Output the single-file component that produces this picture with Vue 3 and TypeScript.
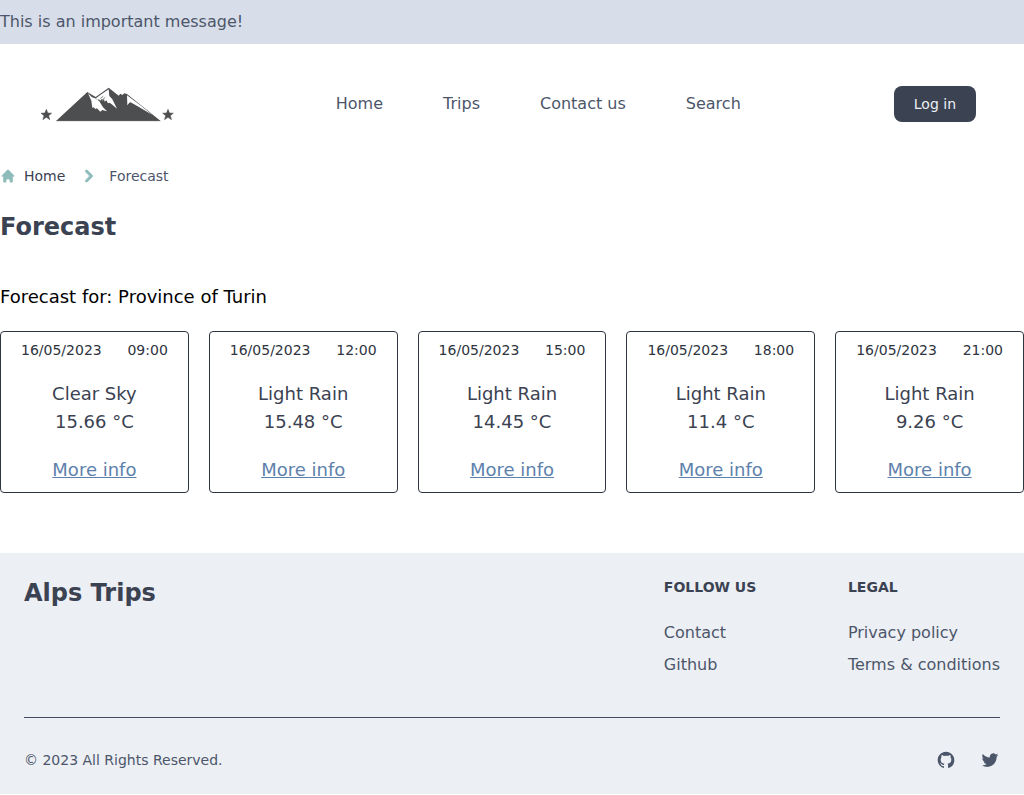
<script setup lang="ts">
interface Slot {
  time: string
  sky: string
  temp: string
}

const date = '16/05/2023'
const navLinks: string[] = ['Home', 'Trips', 'Contact us', 'Search']
const slots: Slot[] = [
  { time: '09:00', sky: 'Clear Sky', temp: '15.66' },
  { time: '12:00', sky: 'Light Rain', temp: '15.48' },
  { time: '15:00', sky: 'Light Rain', temp: '14.45' },
  { time: '18:00', sky: 'Light Rain', temp: '11.4' },
  { time: '21:00', sky: 'Light Rain', temp: '9.26' },
]
const footerGroups = [
  { title: 'Follow us', links: ['Contact', 'Github'] },
  { title: 'Legal', links: ['Privacy policy', 'Terms & conditions'] },
]
</script>

<template>
  <div class="page">
    <div class="banner">This is an important message!</div>

    <header class="header">
      <svg class="logo" viewBox="0 0 465 150" aria-label="Alps Trips">
        <g fill="#4d4e50">
          <path d="M78 123 L172 36 L197 51 L236 23 L266 47 L271 41 L277 45 L283 40 L291 42 L392 123 Z" />
          <path d="M49 88 L53.500 99 L65 99.500 L56 107 L59.500 119 L49 112 L38.500 119 L42 107 L33 99.500 L44.500 99 Z" stroke="#4d4e50" stroke-width="1.500" />
          <path d="M414 88 L418.500 99 L430 99.500 L421 107 L424.500 119 L414 112 L403.500 119 L407 107 L398 99.500 L409.500 99 Z" stroke="#4d4e50" stroke-width="1.500" />
        </g>
        <g fill="#fff">
          <path d="M174 39 L185 51 L195 55 L208 64 L219 82 L231 94 L217 90 L211 95 L200 84 L198 88 L190 82 L187 84 L184 62 Z" />
          <path d="M236 28 L238 48 L247 58 L261 86 L247 74 L239 68 L234 70 L229 61 L224 65 L222 57 L217 62 L215 56 L210 63 L207 57 L203 61 L200 56 L196 56 L215 42 Z" />
          <path d="M291 46 L334 78 L366 104 L327 81 L307 70 L302 67 L298 68 L292 76 Z" />
        </g>
        <path d="M211 55 L220 49 M216 60 L226 52" stroke="#4d4e50" stroke-width="2" />
        <path d="M78 124 H392" stroke="#c9c9ca" stroke-width="1.500" />
      </svg>
      <nav class="nav">
        <a v-for="link in navLinks" :key="link">{{ link }}</a>
      </nav>
      <button class="login">Log in</button>
    </header>

    <div class="crumbs">
      <svg class="home" viewBox="0 0 20 20" fill="currentColor">
        <path d="M10.707 2.293a1 1 0 00-1.414 0l-7 7a1 1 0 001.414 1.414L4 10.414V17a1 1 0 001 1h2a1 1 0 001-1v-2a1 1 0 011-1h2a1 1 0 011 1v2a1 1 0 001 1h2a1 1 0 001-1v-6.586l.293.293a1 1 0 001.414-1.414l-7-7z" />
      </svg>
      <a class="crumb-home">Home</a>
      <svg class="chevron" viewBox="0 0 20 20" fill="currentColor" stroke="currentColor" stroke-width="0.700">
        <path fill-rule="evenodd" clip-rule="evenodd" d="M7.293 14.707a1 1 0 010-1.414L10.586 10 7.293 6.707a1 1 0 011.414-1.414l4 4a1 1 0 010 1.414l-4 4a1 1 0 01-1.414 0z" />
      </svg>
      <span>Forecast</span>
    </div>

    <h1>Forecast</h1>
    <h2>Forecast for: Province of Turin</h2>

    <section class="cards">
      <article v-for="slot in slots" :key="slot.time" class="card">
        <div class="when"><span>{{ date }}</span><span>{{ slot.time }}</span></div>
        <p>{{ slot.sky }}</p>
        <p>{{ slot.temp }} °C</p>
        <a class="more">More info</a>
      </article>
    </section>

    <footer class="footer">
      <div class="footer-top">
        <div class="brand">Alps Trips</div>
        <div class="groups">
          <div v-for="group in footerGroups" :key="group.title">
            <h3>{{ group.title }}</h3>
            <a v-for="link in group.links" :key="link" class="footer-link">{{ link }}</a>
          </div>
        </div>
      </div>
      <div class="footer-bottom">
        <span>© 2023 All Rights Reserved.</span>
        <div class="social">
          <svg viewBox="0 0 24 24" fill="currentColor" aria-label="GitHub">
            <path fill-rule="evenodd" clip-rule="evenodd" d="M12 2C6.477 2 2 6.484 2 12.017c0 4.425 2.865 8.180 6.839 9.504.5.092.682-.217.682-.483 0-.237-.008-.868-.013-1.703-2.782.605-3.369-1.343-3.369-1.343-.454-1.158-1.110-1.466-1.110-1.466-.908-.62.069-.608.069-.608 1.003.07 1.531 1.032 1.531 1.032.892 1.530 2.341 1.088 2.910.832.092-.647.350-1.088.636-1.338-2.220-.253-4.555-1.113-4.555-4.951 0-1.093.390-1.988 1.029-2.688-.103-.253-.446-1.272.098-2.650 0 0 .840-.270 2.750 1.026A9.564 9.564 0 0112 6.844c.850.004 1.705.115 2.504.337 1.909-1.296 2.747-1.027 2.747-1.027.546 1.379.202 2.398.1 2.651.640.700 1.028 1.595 1.028 2.688 0 3.848-2.339 4.695-4.566 4.943.359.309.678.920.678 1.855 0 1.338-.012 2.419-.012 2.747 0 .268.180.580.688.482A10.019 10.019 0 0022 12.017C22 6.484 17.522 2 12 2z" />
          </svg>
          <svg viewBox="0 0 24 24" fill="currentColor" aria-label="Twitter">
            <path d="M8.290 20.251c7.547 0 11.675-6.253 11.675-11.675 0-.178 0-.355-.012-.53A8.348 8.348 0 0022 5.920a8.190 8.190 0 01-2.357.646 4.118 4.118 0 001.804-2.270 8.224 8.224 0 01-2.605.996 4.107 4.107 0 00-6.993 3.743 11.650 11.650 0 01-8.457-4.287 4.106 4.106 0 001.270 5.477A4.072 4.072 0 012.800 9.713v.052a4.105 4.105 0 003.292 4.022 4.095 4.095 0 01-1.853.070 4.108 4.108 0 003.834 2.850A8.233 8.233 0 012 18.407a11.616 11.616 0 006.290 1.840" />
          </svg>
        </div>
      </div>
    </footer>
  </div>
</template>

<style>
body {
  margin: 0;
  background: #fff;
}
</style>

<style scoped>
.page {
  font-family: "DejaVu Sans", sans-serif;
  font-size: 16px;
  line-height: 24px;
  color: #4c566a;
}
h1, h2, h3, p {
  margin: 0;
}
.banner {
  padding: 10px 0;
  background: #d8dee9;
}
.header {
  display: grid;
  grid-template-columns: 305.8px 1fr auto;
  align-items: center;
  height: 120px;
  padding: 0 48px 0 30px;
}
.logo {
  width: 155px;
  height: 50px;
  margin-top: 2px;
}
.nav {
  display: flex;
  gap: 60px;
}
.login {
  padding: 8px 20px;
  border: 0;
  border-radius: 8px;
  background: #3b4252;
  color: #eceff4;
  font-family: inherit;
  font-size: 14px;
  line-height: 20px;
}
.crumbs {
  display: flex;
  align-items: center;
  height: 24px;
  font-size: 14px;
}
.home {
  width: 16px;
  height: 16px;
  margin-right: 8px;
  color: #8fbcbb;
}
.crumb-home {
  color: #3b4252;
}
.chevron {
  width: 24px;
  height: 24px;
  margin: 0 8px 0 12px;
  color: #8fbcbb;
}
h1 {
  margin-top: 23px;
  font-size: 24px;
  line-height: 32px;
  color: #3b4252;
}
h2 {
  margin: 40px 0 20px;
  font-size: 18px;
  line-height: 28px;
  font-weight: 400;
  color: #000;
}
.cards {
  display: grid;
  grid-template-columns: repeat(5, 1fr);
  gap: 20px;
}
.card {
  box-sizing: border-box;
  height: 162px;
  padding: 8px 20px;
  border: 1px solid #2e3440;
  border-radius: 4px;
  font-size: 18px;
  line-height: 28px;
  text-align: center;
  color: #3b4252;
}
.when {
  display: flex;
  justify-content: space-between;
  margin-bottom: 20px;
  font-size: 14px;
  line-height: 20px;
  color: #2e3440;
}
.more {
  display: block;
  margin-top: 20px;
  color: #5e81ac;
  text-decoration: underline;
}
.footer {
  margin-top: 60px;
  padding: 24px;
  background: #eceff4;
}
.footer-top {
  display: flex;
  justify-content: space-between;
  height: 140px;
}
.brand {
  font-size: 24px;
  line-height: 32px;
  font-weight: 700;
  color: #3b4252;
}
.groups {
  display: flex;
  gap: 91.6px;
}
h3 {
  margin-bottom: 24px;
  font-size: 14px;
  line-height: 20px;
  text-transform: uppercase;
  color: #3b4252;
}
.footer-link {
  display: block;
  margin-bottom: 8px;
}
.footer-bottom {
  display: flex;
  justify-content: space-between;
  align-items: center;
  padding-top: 32px;
  border-top: 1px solid #434c5e;
  font-size: 14px;
  line-height: 20px;
}
.social {
  display: flex;
  gap: 24px;
}
.social svg {
  width: 20px;
  height: 20px;
}
</style>
